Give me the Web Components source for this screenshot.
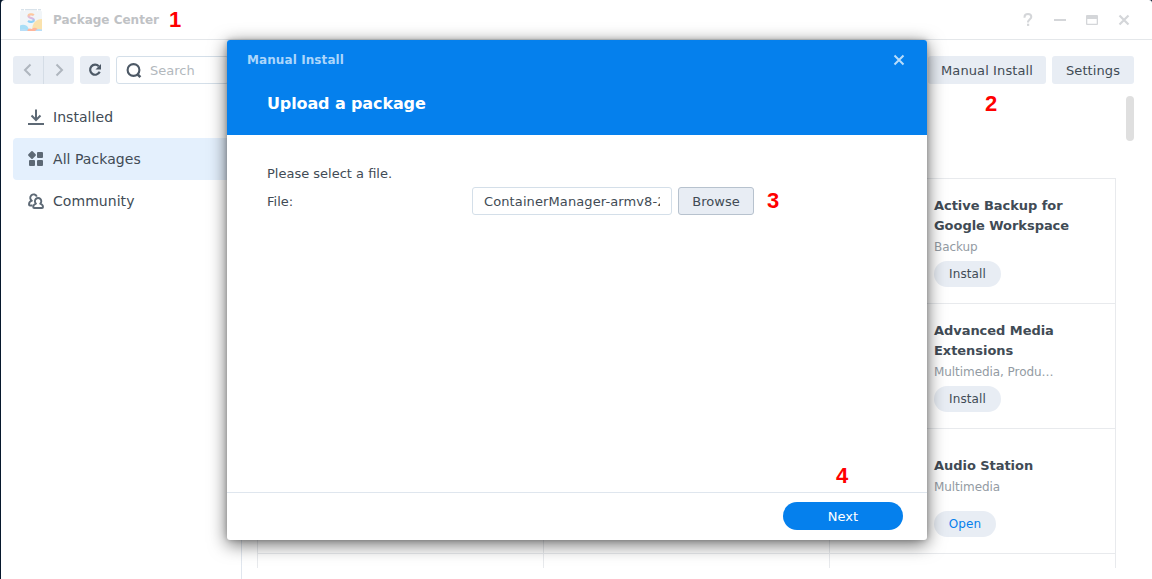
<!DOCTYPE html>
<html lang="en">
<head>
<meta charset="utf-8">
<title>Package Center</title>
<style>
html,body{margin:0;height:100%;overflow:hidden;background:#fff}
body{font:13px/20px "DejaVu Sans",Verdana,sans-serif;color:#414b55}
</style>
</head>
<body>
<pc-desktop></pc-desktop>
<script>
const define = (name, css, html) => customElements.define(name, class extends HTMLElement {
  constructor() {
    super();
    this.attachShadow({mode: 'open'}).innerHTML = `<style>*{box-sizing:border-box}svg{display:block}${css}</style>${html}`;
  }
});

/* Numbered step marker laid over the interface */
define('step-mark', `:host{position:absolute;font:bold 22px/24px "Liberation Sans",Arial,sans-serif;color:#f00;width:13px}`, `<slot></slot>`);

define('tool-button', `
:host{display:flex;align-items:center;justify-content:center;box-sizing:border-box;height:28px;background:#e8edf4;border-radius:3px;white-space:nowrap}`, `<slot></slot>`);

define('pill-button', `
:host{display:flex;align-items:center;justify-content:center;box-sizing:border-box;height:26px;width:67px;border-radius:13px;background:#e8edf4;font-size:12px;letter-spacing:.1px}
:host([open]){width:62px;color:#0580ed}`, `<slot></slot>`);

define('nav-item', `
:host{display:flex;align-items:center;box-sizing:border-box;height:42px;padding-left:14px;gap:8px;border-radius:4px;font-size:14px;letter-spacing:.05px}
:host([active]){background:#e4f0fd}
.i{width:18px;height:18px}`, `<div class="i"><slot name="icon"></slot></div><span><slot></slot></span>`);

define('title-bar', `
:host{display:flex;align-items:center;box-sizing:border-box;height:40px;border-bottom:1px solid #e4e7ea;padding:0 16px 0 19px;flex:none}
.t{margin-left:11px;font-weight:bold;font-size:12px;color:#bfc2c5;flex:1}
.w{display:flex;gap:8px}
`, `
<svg width="22" height="24" viewBox="0 0 22 24"><rect x="0" y="3" width="22" height="20" rx="1" fill="#f1f5f8"/><path d="M1 1.800h20" stroke="#c8d6e1" stroke-dasharray="3 1 12 1 4"/>
<path d="M12 23c0-8 4-12 10-12v12z" fill="#fae2ad"/><path d="M0 17.500c3-1.500 7-.5 8 2l2 3.500H0z" fill="#a8def7"/><path d="M7 23c1-3 3-3 5-2 3-3 6 0 7 2z" fill="#ffb69c"/><path d="M0 23v-1.500c3-1 6-1 8 1.500zM15 23c2-2.500 4-2.500 7-1.500V23z" fill="#b8def8"/>
<path d="M13.800 7.200c-1.200-1.200-5.300-1.400-5.300.9 0 2.600 5.300 1.300 5.300 3.900 0 2.200-3.900 2.400-5.800.8" fill="none" stroke="url(#g)" stroke-width="2.200"/>
<defs><linearGradient id="g" x1="0" y1="0" x2="0" y2="1"><stop stop-color="#ffc99b"/><stop offset=".5" stop-color="#dcb8e4"/><stop offset="1" stop-color="#85d3fa"/></linearGradient></defs></svg>
<span class="t">Package Center</span>
<div class="w">
<svg width="24" height="24" fill="none" stroke="#d4d6d9" stroke-width="2"><path d="M8.500 9.800V9.200c0-2.300 1.500-3.200 3.500-3.200s3.300 1 3.300 3-3.300 2.700-3.300 5.500"/><path d="M11 16.800h2.200" stroke-width="2.200"/></svg>
<svg width="24" height="24"><path d="M6 11h12v2H6z" fill="#d4d6d9"/></svg>
<svg width="24" height="24"><path fill-rule="evenodd" d="M6 8q0-1 1-1h10q1 0 1 1v8q0 1-1 1H7q-1 0-1-1zm1.300 3v4.700h9.400V11z" fill="#d4d6d9"/></svg>
<svg width="24" height="24"><path d="M7.500 7.500l9 9m0-9l-9 9" stroke="#d4d6d9" stroke-width="2.200"/></svg>
</div>`);

define('side-bar', `
:host{display:flex;flex-direction:column;box-sizing:border-box;width:241px;flex:none;border-right:1px solid #e0e6ee;padding:16px 0 0 12px}
.tools{display:flex;height:28px;margin-bottom:12px}
.l{width:31px;border-radius:3px 0 0 3px;border-right:1px solid #d5dde6}
.r{width:30px;border-radius:0 3px 3px 0}
.f{width:30px;margin:0 6px}
.s{flex:1;border:1px solid #d4dfe9;border-radius:3px;display:flex;align-items:center;padding-left:9px;gap:7px;color:#b2b8bd;margin-right:12px}
.s span{padding-top:1px}
`, `
<div class="tools">
<tool-button class="l"><svg width="12" height="14" fill="none" stroke="#afb6be" stroke-width="2"><path d="M8.500 1.500L3 7l5.500 5.500"/></svg></tool-button>
<tool-button class="r"><svg width="12" height="14" fill="none" stroke="#afb6be" stroke-width="2"><path d="M3.500 1.500L9 7l-5.500 5.500"/></svg></tool-button>
<tool-button class="f"><svg width="14" height="14"><path d="M10.800 3.300A5 5 0 1 0 11.700 8.800" fill="none" stroke="#4d5966" stroke-width="2.200"/><path d="M13 1v5.500H7.500z" fill="#4d5966"/></svg></tool-button>
<div class="s"><svg width="17" height="17" fill="none" stroke="#4d5966"><circle cx="7.500" cy="8" r="5.900" stroke-width="2.100"/><path d="M11.200 12l3.200 3.200" stroke-width="2.500"/></svg><span>Search</span></div>
</div>
<nav-item><svg slot="icon" width="18" height="18" fill="none" stroke="#5d6975" stroke-width="2"><path d="M9 1.500v10M4.500 7.500L9 12l4.500-4.500M1 16h16"/></svg>Installed</nav-item>
<nav-item active><svg slot="icon" width="18" height="18" fill="#5d6975"><path d="M5 2l3 3-3 3-3-3z" stroke="#5d6975" stroke-width="1.800" stroke-linejoin="round"/><rect x="10" y="2" width="6" height="6" rx="1"/><rect x="2" y="10" width="6" height="6" rx="1"/><rect x="10" y="10" width="6" height="6" rx="1"/></svg>All Packages</nav-item>
<nav-item><svg slot="icon" width="18" height="18" fill="none" stroke="#5d6975" stroke-width="1.900" stroke-linejoin="round"><path d="M5.500 13.500H3Q2 13.500 2 12.500 2 9.700 4.900 8.700A3.400 3.400 0 1 1 9.800 4.600"/><path d="M9 11.600A3.200 3.200 0 1 1 13.200 11.600Q16 12.500 16 15 16 16 15 16H7.200Q6.200 16 6.200 15 6.200 12.500 9 11.600z"/></svg>Community</nav-item>`);

define('package-card', `
:host{display:flex;flex-direction:column;box-sizing:border-box;width:286px;height:125px;border-right:1px solid #e8eaed;border-bottom:1px solid #e8eaed;padding:16px 40px 15px 104px}
.x{height:62px;display:flex;flex-direction:column;justify-content:center;margin-bottom:4px}
.n{font-weight:bold;white-space:pre-line;margin-bottom:1px;letter-spacing:-.05px;margin-right:-20px}
.c{font-size:12px;color:#939ba3;letter-spacing:-.06px}`, `
<div class="x"><div class="n"><slot name="name"></slot></div><div class="c"><slot name="category"></slot></div></div><slot></slot>`);

define('package-list', `
:host{display:flex;flex-direction:column;flex:1;min-width:0;padding:16px 18px 0 15px}
.bar{display:flex;justify-content:flex-end;gap:6px;height:28px}
.bar tool-button{padding-top:1px;letter-spacing:.1px}
.m{width:118px}.s{width:82px}
.scroll{display:flex;justify-content:flex-end;height:94px;padding-top:12px}
.thumb{width:8px;height:45px;border-radius:4px;background:#dfdfdf}
.grid{display:grid;grid-template-columns:repeat(3,286px);grid-template-rows:repeat(3,125px) 14px;width:859px;height:390px;overflow:hidden;border-top:1px solid #e8eaed;border-left:1px solid #e8eaed}
.cut{height:14px;border-bottom:0;padding:0;overflow:hidden}`, `
<div class="bar"><tool-button class="m">Manual Install</tool-button><tool-button class="s">Settings</tool-button></div>
<div class="scroll"><div class="thumb"></div></div>
<div class="grid">
<package-card></package-card><package-card></package-card>
<package-card><span slot="name">Active Backup for
Google Workspace</span><span slot="category">Backup</span><pill-button>Install</pill-button></package-card>
<package-card></package-card><package-card></package-card>
<package-card><span slot="name">Advanced Media
Extensions</span><span slot="category">Multimedia, Produ…</span><pill-button>Install</pill-button></package-card>
<package-card></package-card><package-card></package-card>
<package-card><span slot="name">Audio Station</span><span slot="category">Multimedia</span><pill-button open>Open</pill-button></package-card>
<package-card class="cut"></package-card><package-card class="cut"></package-card><package-card class="cut"></package-card>
</div>`);

define('install-dialog', `
:host{position:absolute;left:227px;top:40px;width:700px;height:500px;display:flex;flex-direction:column;background:#fff;border-radius:3px;box-shadow:0 4px 18px rgba(0,0,0,.6),0 0 5px rgba(0,0,0,.2)}
header{height:95px;background:#0580ed;border-radius:3px 3px 0 0;padding:10px 20px 0}
.top{display:flex;justify-content:space-between;font-size:12px;font-weight:bold;color:#acd6fb;height:20px;letter-spacing:.09px}
h1{margin:23px 0 0 20px;font-size:16px;line-height:22px;color:#fff;letter-spacing:-.12px}
main{flex:1;padding:29px 40px 0}
.row{display:flex;align-items:center;height:28px;margin-top:3px}
.row label{width:205px;padding-top:1px}
.field{width:200px;height:28px;border:1px solid #d4dfe9;border-radius:3px;padding:0 11px;line-height:27px;letter-spacing:.11px}
.field div{overflow:hidden;white-space:nowrap}
.b{width:76px;margin-left:6px;border:1px solid #b7c2ce;padding-top:1px}
footer{height:48px;border-top:1px solid #dfe6ee;display:flex;justify-content:flex-end;padding:9px 24px 0}
.next{width:120px;height:28px;padding-top:2px;border-radius:14px;background:#0580ed;color:#fff;display:flex;align-items:center;justify-content:center}`, `
<header><div class="top"><span>Manual Install</span><svg width="16" height="20"><path d="M3.500 5.500l9 9m0-9l-9 9" stroke="#b8dcfb" stroke-width="2"/></svg></div><h1>Upload a package</h1></header>
<main><div>Please select a file.</div><div class="row"><label>File:</label><div class="field"><div>ContainerManager-armv8-2</div></div><tool-button class="b">Browse</tool-button></div></main>
<footer><div class="next">Next</div></footer>`);

define('pc-desktop', `
:host{display:block;position:relative;width:1152px;height:579px;background:#07182d;overflow:hidden}
.win{display:flex;flex-direction:column;height:579px;margin-left:1px;background:#fff;border-radius:4px 3px 0 0}
.body{display:flex;flex:1;min-height:0}`, `
<div class="win"><title-bar></title-bar><div class="body"><side-bar></side-bar><package-list></package-list></div></div>
<install-dialog></install-dialog>
<step-mark style="left:169px;top:8px">1</step-mark><step-mark style="left:985px;top:92px">2</step-mark>
<step-mark style="left:767px;top:189px">3</step-mark><step-mark style="left:836px;top:464px">4</step-mark>`);
</script>
</body>
</html>
